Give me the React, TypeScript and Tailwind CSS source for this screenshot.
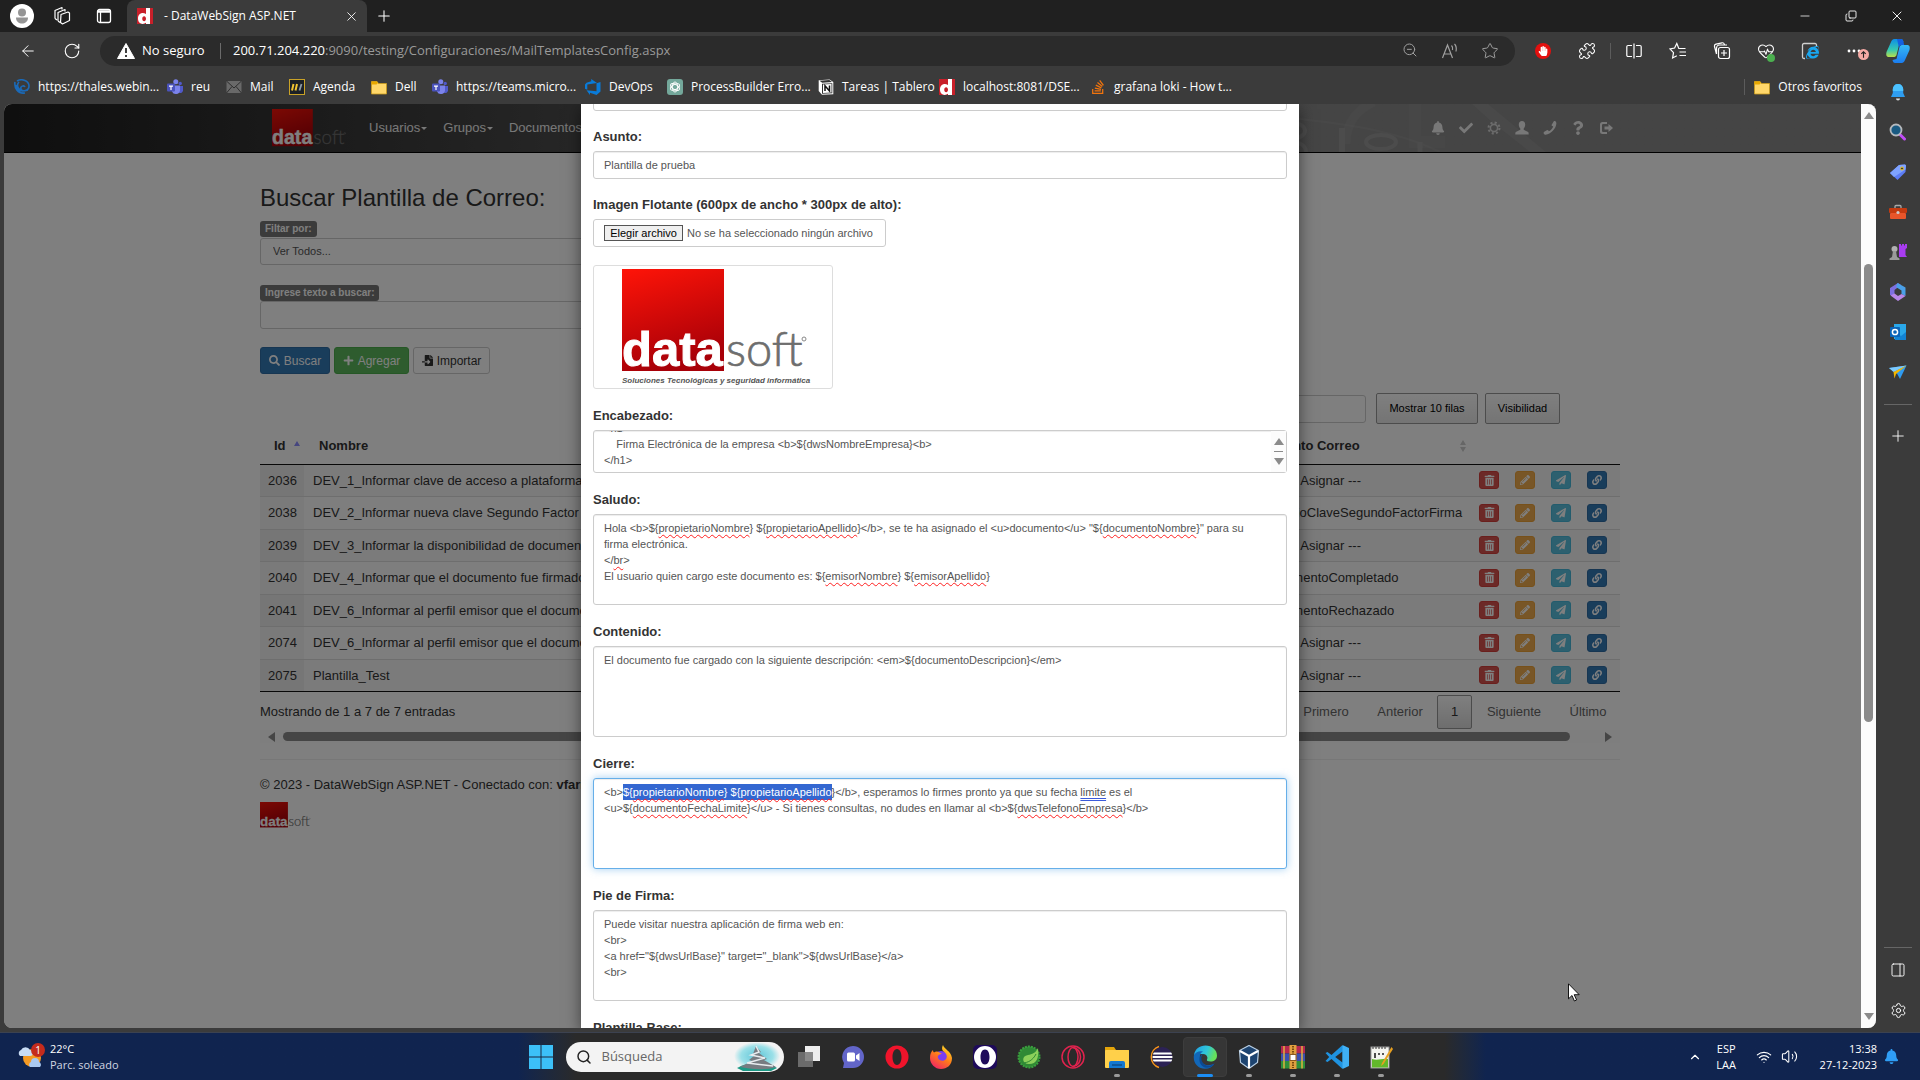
import React, { useEffect, useRef } from "react";
import {
  ArrowLeft, ChevronUp, Copy, HeartPulse, Minus, PanelRight, Plus, Puzzle, RotateCw,
  Search, Settings, Star, Volume2, Wifi, X, ZoomOut,
} from "lucide-react";
import {
  FaBell, FaCheck, FaFileImport, FaHandPaper, FaInternetExplorer, FaLink,
  FaPaperPlane, FaPencilAlt, FaPlus, FaQuestion, FaSearch, FaStackOverflow, FaTrashAlt,
} from "react-icons/fa";

const UI = "font-['Open_Sans','Noto_Sans',sans-serif]";

/* ---------- logos ---------- */

function DatasoftLogo({ id, className, viewBox, tagline }: { id: string; className: string; viewBox: string; tagline?: boolean }) {
  return (
    <svg viewBox={viewBox} className={className} role="img" aria-label="datasoft">
      <defs>
        <linearGradient id={id} x1="0" y1="0" x2="0.3" y2="1">
          <stop offset="0" stopColor="#ff1408" />
          <stop offset="1" stopColor="#a80008" />
        </linearGradient>
      </defs>
      <rect width="102" height="102" fill={`url(#${id})`} />
      <text x="0" y="97" fontFamily="Liberation Sans, sans-serif" fontWeight="700" fontSize="49" fill="#fff" stroke="#fff" strokeWidth="1">data</text>
      <text x="104" y="97" fontFamily="Lato, sans-serif" fontWeight="300" fontSize="47" fill="#6e6e6e" stroke="#6e6e6e" strokeWidth=".7">soft</text>
      <circle cx="182" cy="70" r="2" fill="none" stroke="#888" />
      {tagline && (
        <text x="0" y="114" fontFamily="Liberation Sans, sans-serif" fontStyle="italic" fontWeight="700" fontSize="8" fill="#555">
          Soluciones Tecnológicas y seguridad informática
        </text>
      )}
    </svg>
  );
}

function DFavicon() {
  return (
    <svg viewBox="0 0 16 16" className="size-4 shrink-0">
      <rect width="16" height="16" fill="#c8202a" />
      <path d="M9 0h4v16H9v-1.2C5 17.500 1 15 1 10.500S5 3.500 9 6zM7.200 8.200c-2.600 0-2.600 5 0 5s2.200-5 0-5z" fill="#fff" />
    </svg>
  );
}

function Folder({ className }: { className: string }) {
  return (
    <svg viewBox="0 0 16 16" className={className}>
      <path d="M.5 2.500h5.500l1.500 2h8v10.500H.5z" fill="#ffd76a" stroke="#c99a1c" strokeWidth=".8" />
      <path d="M.5 2.500h5.500l1 1.500-1.500 1.500h-5z" fill="#e8a800" />
    </svg>
  );
}

function Teams() {
  return (
    <svg viewBox="0 0 16 16" className="size-4 shrink-0">
      <circle cx="13.200" cy="4.500" r="1.700" fill="#5059c9" />
      <circle cx="8.800" cy="2.800" r="2.500" fill="#7b83eb" />
      <path d="M10 7h6v4.500a2.700 2.700 0 0 1-4 2.200z" fill="#5059c9" />
      <path d="M5 6.500h8v5a4.200 4.200 0 0 1-8 1z" fill="#7b83eb" />
      <rect y="4.500" width="8" height="8" rx="1" fill="#4b53bc" />
      <path d="M2 6.500h4v1.200H4.600V11H3.400V7.700H2z" fill="#fff" />
    </svg>
  );
}

function Swirl() {
  return (
    <svg viewBox="0 0 16 16" className="size-4 shrink-0" fill="none" stroke="#1b6ab8" strokeWidth="1.600">
      <path d="M1 3c-1 6 3 12 10 11M3 2c5-3 12 0 12 5s-7 6-8 3 3-4 4-2M2 6c2 6 5 7 12 5M5 3c-3 3-1 8 4 9" />
    </svg>
  );
}

function MailIcon() {
  return (
    <svg viewBox="0 0 16 16" className="size-4 shrink-0">
      <rect x=".5" y="2" width="15" height="12" fill="#696969" />
      <path d="M.5 2l7.500 7 7.500-7M.5 14l5.500-6.500M15.500 14L10 7.500" fill="none" stroke="#2e2e2e" />
    </svg>
  );
}

function AgendaIcon() {
  return (
    <svg viewBox="0 0 16 16" className="size-4 shrink-0">
      <rect x=".5" y=".5" width="15" height="15" fill="#1b2026" stroke="#c9a227" />
      <path d="M3 11.500L4.500 5M6.500 11.500L8 5" stroke="#f2c431" strokeWidth="2" />
      <path d="M10.500 11.500L12.500 5" stroke="#8d99a6" strokeWidth="1.800" />
    </svg>
  );
}

function DevOpsIcon() {
  return (
    <svg viewBox="0 0 16 16" className="size-4 shrink-0">
      <path d="M15.500 3v9.500L11.500 16 5 13.700V16l-3.500-4.700 10 .9V4.200zM12 4L6.200 0v2.200L1.500 3.700 0 5.500v4.300l2.300 1V5.500z" fill="#0a7bd8" />
    </svg>
  );
}

function GptIcon() {
  return (
    <svg viewBox="0 0 16 16" className="size-4 shrink-0">
      <rect width="16" height="16" rx="3" fill="#74a89b" />
      <g fill="none" stroke="#fff" strokeWidth=".9">
        <ellipse cx="8" cy="8" rx="2.600" ry="5" />
        <ellipse cx="8" cy="8" rx="2.600" ry="5" transform="rotate(60 8 8)" />
        <ellipse cx="8" cy="8" rx="2.600" ry="5" transform="rotate(120 8 8)" />
      </g>
    </svg>
  );
}

function NotionIcon() {
  return (
    <svg viewBox="0 0 16 16" className="size-4 shrink-0">
      <path d="M.7 1.200L11.500.5 15.300 3v12.300L4 15.700.7 12z" fill="#fff" />
      <path d="M1.500 1.700l9.800-.6L14 3l-9.800.7zM4 4.800l10.300-.6v10L4 14.700z" fill="#333" />
      <path d="M5 5.500l8.500-.5v8.400l-8.500.5z" fill="#fff" />
      <path d="M7 12V6.800L11.500 12V6.500" fill="none" stroke="#111" strokeWidth="1.500" />
    </svg>
  );
}

function Copilot() {
  return (
    <svg viewBox="0 0 24 24" className="size-6">
      <defs>
        <linearGradient id="cp1" x1="0" y1="0" x2="0" y2="1">
          <stop offset="0" stopColor="#0d8ee8" />
          <stop offset=".6" stopColor="#35c9b0" />
          <stop offset="1" stopColor="#b9e04a" />
        </linearGradient>
        <linearGradient id="cp2" x1="0" y1="0" x2="0" y2="1">
          <stop offset="0" stopColor="#35b8f5" />
          <stop offset="1" stopColor="#1b7df0" />
        </linearGradient>
      </defs>
      <path d="M5 3c.5-1.500 1.500-3 3.500-3H15c1.500 0 2 1 2.500 3l-4 1-3 12c-.5 1.500-1.500 2-3 2H3c-3 0-3-2.500-2.500-5z" fill="url(#cp1)" />
      <path d="M19 21c-.5 1.500-1.500 3-3.500 3H9c-1.500 0-2-1-2.500-3l4-1 3-12c.5-1.500 1.500-2 3-2H21c3 0 3 2.500 2.500 5z" fill="url(#cp2)" />
      <path d="M11 0h4c1.500 0 2 1 2.500 3l.7 3H16c-1.500 0-2.500 1-3 3z" fill="#1460e0" />
    </svg>
  );
}

/* ---------- browser chrome ---------- */

function TitleBar() {
  return (
    <div className={`flex h-8 shrink-0 items-center bg-[#202020] text-white ${UI}`}>
      <div className="flex w-[127px] shrink-0 items-center pl-[10px]">
        <button aria-label="Perfil" className="flex size-6 items-center justify-center rounded-full bg-white">
          <svg viewBox="0 0 24 24" className="size-6" fill="#949494"><circle cx="12" cy="8.500" r="4" /><path d="M6 13.500h12c0 8-12 8-12 0z" /></svg>
        </button>
        <button aria-label="Áreas de trabajo" className="ml-[18px]">
          <svg viewBox="0 0 20 20" className="size-5" fill="none" stroke="#fff" strokeWidth="1.200" strokeLinejoin="round">
            <path d="M9 8.500l7-2.500 1.500 1V14.500l-7 3.500-2-1.500zM6 15V6.500L13 3.500v2M3 12.500V4.500L10 1.500v2M3 12.500l2 1.500M6 15l2 1.500" />
          </svg>
        </button>
        <button aria-label="Pestañas" className="ml-[24px]">
          <svg viewBox="0 0 16 16" className="size-4" fill="none" stroke="#fff" strokeWidth="1.300"><rect x="1.500" y="1.500" width="13" height="13" rx="2" /><path d="M1.500 3.500h13" strokeWidth="2.500" /><path d="M4.500 4v10" /></svg>
        </button>
      </div>
      <div className="flex h-8 w-60 items-center rounded-t-lg bg-[#3b3b3b] pl-[10px] pr-2">
        <DFavicon />
        <span className="ml-[11px] flex-1 whitespace-nowrap text-xs">- DataWebSign ASP.NET</span>
        <button aria-label="Cerrar pestaña"><X size={15} strokeWidth={1.400} /></button>
      </div>
      <button aria-label="Nueva pestaña" className="ml-2"><Plus size={18} strokeWidth={1.400} /></button>
      <div className="flex-1" />
      <button aria-label="Minimizar" className="flex w-[46px] justify-center"><Minus size={14} strokeWidth={1.300} /></button>
      <button aria-label="Restaurar" className="flex w-[46px] justify-center"><Copy size={12} strokeWidth={1.800} className="-scale-x-100 rotate-180" /></button>
      <button aria-label="Cerrar" className="flex w-[46px] justify-center"><X size={16} strokeWidth={1.400} /></button>
    </div>
  );
}

function ToolButton({ label, children }: { label: string; children: React.ReactNode }) {
  return <button aria-label={label} className="relative flex w-11 shrink-0 items-center justify-center">{children}</button>;
}

function Toolbar() {
  return (
    <div className={`flex h-[38px] shrink-0 items-center text-white ${UI}`}>
      <button aria-label="Atrás" className="ml-[19px]"><ArrowLeft size={18} strokeWidth={1.300} /></button>
      <button aria-label="Actualizar" className="ml-[26px]"><RotateCw size={18} strokeWidth={1.500} /></button>
      <div className="ml-[19px] flex h-[30px] flex-1 items-center rounded-full bg-[#2b2b2b] pl-[17px] pr-[5px]">
        <svg viewBox="0 0 18 16" className="h-4 w-[18px] shrink-0"><path d="M9 .5L17.500 15.500H.5z" fill="#fff" stroke="#fff" strokeLinejoin="round" /><path d="M9 5v5M9 12v2" stroke="#2b2b2b" strokeWidth="1.800" /></svg>
        <span className="ml-[7px] w-[66px] whitespace-nowrap text-[13px]">No seguro</span>
        <span className="mx-[12px] h-4 w-px bg-[#6b6b6b]" />
        <div className="min-w-0 flex-1 truncate text-[13px] text-[#9a9a9a]">
          <span className="text-white">200.71.204.220</span>:9090/testing/Configuraciones/MailTemplatesConfig.aspx
        </div>
        <div className="flex text-[#a0a0a0]">
          <button aria-label="Alejar" className="flex w-10 justify-center"><ZoomOut size={16} strokeWidth={1.500} /></button>
          <button aria-label="Leer en voz alta" className="flex w-10 justify-center">
            <svg viewBox="0 0 18 18" className="size-[18px]" fill="none" stroke="currentColor" strokeWidth="1.200"><path d="M1.500 16L6.500 3l5 13M3.300 12h6.400M10.500 3.500c1 1 1.500 2.500 1 4.500M13.500 2c2 2 2 5 1.500 7.500" /></svg>
          </button>
          <button aria-label="Favorito" className="flex w-10 justify-center"><Star size={18} strokeWidth={1.300} /></button>
        </div>
      </div>
      <div className="ml-[6px] flex items-center">
        <ToolButton label="Bloqueador"><span className="flex size-4 items-center justify-center rounded-full bg-[#e3100f]"><FaHandPaper size={10} /></span></ToolButton>
        <ToolButton label="Extensiones"><Puzzle size={18} strokeWidth={1.400} /></ToolButton>
        <span className="mx-px h-4 w-px bg-[#5c5c5c]" />
        <ToolButton label="Pantalla dividida">
          <svg viewBox="0 0 16 16" className="size-4" fill="none" stroke="#fff" strokeWidth="1.200"><path d="M6 2.500H2A1.200 1.200 0 0 0 .8 3.700v8.600A1.200 1.200 0 0 0 2 13.500h4M10 2.500h4a1.200 1.200 0 0 1 1.200 1.200v8.600a1.200 1.200 0 0 1-1.200 1.200h-4M8 .5v15" /></svg>
        </ToolButton>
        <ToolButton label="Favoritos">
          <svg viewBox="0 0 18 18" className="size-[18px]" fill="none" stroke="#fff" strokeWidth="1.200"><path d="M16.500 6.500H9.800L7.800 1.500 5.600 6 1 7l3.500 3.700L3.600 16l4.200-2.300M10.500 10h6.500M10.500 13.500h6.500" /></svg>
        </ToolButton>
        <ToolButton label="Colecciones">
          <svg viewBox="0 0 18 18" className="size-[18px]" fill="none" stroke="#fff" strokeWidth="1.200"><rect x="5.500" y="5.500" width="11" height="11" rx="2" /><path d="M11 8v6M8 11h6M3.500 12L1.500 4.500A2 2 0 0 1 3 2.200l6-1.400a2 2 0 0 1 2.300 1.400l.2.800M3.500 12V6A3 3 0 0 1 6.500 3H14" /></svg>
        </ToolButton>
        <ToolButton label="Rendimiento">
          <HeartPulse size={18} strokeWidth={1.400} />
          <span className="absolute bottom-[-2px] left-[23px] size-2 rounded-full bg-[#4cb050]" />
        </ToolButton>
        <ToolButton label="Modo Internet Explorer">
          <svg viewBox="0 0 18 18" className="size-[18px]" fill="none" stroke="#d0d0d0" strokeWidth="1.300"><path d="M15.500 5V3a1.500 1.500 0 0 0-1.500-1.500H3A1.500 1.500 0 0 0 1.500 3v12A1.500 1.500 0 0 0 3 16.500h1" /></svg>
          <FaInternetExplorer size={13} color="#19a7f0" className="absolute left-[18px] top-[4px]" />
        </ToolButton>
        <ToolButton label="Más">
          <svg viewBox="0 0 14 4" className="h-1 w-[14px]" fill="#fff"><circle cx="2" cy="2" r="1.400" /><circle cx="7" cy="2" r="1.400" /><circle cx="12" cy="2" r="1.400" /></svg>
          <svg viewBox="0 0 10 10" className="absolute left-[26px] top-0 size-[11px]"><circle cx="5" cy="5" r="5" fill="#f5aaa5" /><path d="M5 8V2.500M3 4.500l2-2 2 2" stroke="#222" fill="none" /></svg>
        </ToolButton>
        <ToolButton label="Copilot"><Copilot /></ToolButton>
      </div>
    </div>
  );
}

const bookmarks = [
  { w: "w-[153px]", icon: <Swirl />, text: "https://thales.webin..." },
  { w: "w-[59px]", icon: <Teams />, text: "reu" },
  { w: "w-[63px]", icon: <MailIcon />, text: "Mail" },
  { w: "w-[82px]", icon: <AgendaIcon />, text: "Agenda" },
  { w: "w-[61px]", icon: <Folder className="size-4 shrink-0" />, text: "Dell" },
  { w: "w-[153px]", icon: <Teams />, text: "https://teams.micro..." },
  { w: "w-[82px]", icon: <DevOpsIcon />, text: "DevOps" },
  { w: "w-[151px]", icon: <GptIcon />, text: "ProcessBuilder Erro..." },
  { w: "w-[121px]", icon: <NotionIcon />, text: "Tareas | Tablero" },
  { w: "w-[151px]", icon: <DFavicon />, text: "localhost:8081/DSE..." },
  { w: "w-[151px]", icon: <FaStackOverflow size={16} color="#f2740d" className="shrink-0" />, text: "grafana loki - How t..." },
];

function BookmarksBar() {
  return (
    <nav className={`flex h-[34px] min-w-0 shrink-0 items-center pl-[10px] pr-[14px] text-xs text-white ${UI}`}>
      {bookmarks.map((b) => (
        <a key={b.text} href="#" className={`flex shrink-0 items-center gap-2 whitespace-nowrap ${b.w}`}>{b.icon}{b.text}</a>
      ))}
      <div className="flex-1" />
      <span className="h-4 w-px bg-[#5c5c5c]" />
      <a href="#" className="ml-[9px] flex items-center gap-2 whitespace-nowrap"><Folder className="size-4 shrink-0" />Otros favoritos</a>
    </nav>
  );
}

function EdgeSidebar() {
  const item = "flex h-10 w-full items-center justify-center";
  return (
    <aside className="flex w-11 shrink-0 flex-col items-center pt-[2px] text-white">
      <button aria-label="Notificaciones" className={item}>
        <svg viewBox="0 0 16 18" className="h-[18px] w-4"><path d="M8 1a5 5 0 0 0-5.200 5v4L1 14h14l-1.800-4V6A5 5 0 0 0 8 1z" fill="#2e9df0" /><path d="M8 1a5 5 0 0 0-5.200 5v2h10.400V6A5 5 0 0 0 8 1z" fill="#4cc2ff" /><path d="M6 15.500h4a2 2 0 0 1-4 0z" fill="#ddd" /></svg>
      </button>
      <button aria-label="Buscar" className={item}>
        <svg viewBox="0 0 18 18" className="size-[18px]"><path d="M10.500 11l5 5" stroke="#c04cf5" strokeWidth="3" strokeLinecap="round" /><circle cx="7" cy="7" r="5.500" fill="#195a82" stroke="#b5b9bd" strokeWidth="1.800" /></svg>
      </button>
      <button aria-label="Compras" className={item}>
        <svg viewBox="0 0 18 18" className="size-[18px]"><path d="M10 2l6-.5 1 1-.5 6.500-8 8-7.500-7z" fill="#5c7cf5" /><path d="M10 2l6-.5 1 1-.5 4L5 14 1 10z" fill="#7fa3ff" /><circle cx="13" cy="5.500" r="1.500" fill="#3b3b3b" stroke="#f5c518" /></svg>
      </button>
      <button aria-label="Herramientas" className={item}>
        <svg viewBox="0 0 18 16" className="h-4 w-[18px]"><path d="M6 4V2.500A1 1 0 0 1 7 1.500h4a1 1 0 0 1 1 1V4" fill="none" stroke="#aaa" strokeWidth="1.300" /><rect y="4" width="18" height="5" rx="1" fill="#c43a10" /><rect x="1" y="9" width="16" height="6" rx="1" fill="#e8552a" /><circle cx="9" cy="8.500" r="1.600" fill="#ccc" /></svg>
      </button>
      <button aria-label="Juegos" className={item}>
        <svg viewBox="0 0 18 18" className="size-[18px]"><path d="M10 1h2v1.500h1V1h2v1.500h1V1h2v4l-1.500 1v6L18 14h-8z" fill="#a83cf0" /><circle cx="5.500" cy="6" r="3" fill="#b0b0b0" /><path d="M4 8h3l1 6 2.500 1.500V17H.5v-1.500L3 14z" fill="#9a9a9a" /></svg>
      </button>
      <button aria-label="Microsoft 365" className={item}>
        <svg viewBox="0 0 18 18" className="size-[18px]"><path d="M9 0l3 2-6.500 5v6L1 12V5z" fill="#7d6fe0" /><path d="M8.500 0L16.500 4.500V13L12.500 11V7.500L7 4z" fill="#4aa0e8" /><path d="M1.500 12.500L5.500 10.500l3.500 2.500 3.500-2 4 2L9 18z" fill="#b887e8" /></svg>
      </button>
      <button aria-label="Outlook" className={item}>
        <svg viewBox="0 0 18 18" className="size-[18px]"><rect x="5" y="1" width="12" height="15" fill="#2aa8ea" /><path d="M6 9l6 4 5-4v8H6z" fill="#1283d4" /><rect x="1" y="4" width="10" height="10" rx="1" fill="#0a64b8" /><circle cx="6" cy="9" r="2.600" fill="none" stroke="#fff" strokeWidth="1.500" /></svg>
      </button>
      <button aria-label="Drop" className={item}>
        <svg viewBox="0 0 18 16" className="h-4 w-[18px]"><path d="M0 4L17.500 1.500 11 15 8 9.500z" fill="#2f9bf0" /><path d="M0 4l17.500-2.500L4.500 8z" fill="#7ccaff" /><path d="M4.500 8l13-6.500L7 10l-1.500 4.500z" fill="#f5b800" /></svg>
      </button>
      <hr className="mt-[12px] w-7 border-[#666]" />
      <button aria-label="Personalizar" className="mt-[11px] flex h-10 items-center"><Plus size={18} strokeWidth={1.200} /></button>
      <div className="flex-1" />
      <hr className="w-7 border-[#666]" />
      <button aria-label="Barra lateral" className="flex h-11 items-center"><PanelRight size={16} strokeWidth={1.400} /></button>
      <button aria-label="Configuración" className="mb-1 flex h-9 items-center"><Settings size={17} strokeWidth={1.400} /></button>
    </aside>
  );
}

/* ---------- page behind the dialog ---------- */

function Caret() {
  return <span className="ml-px inline-block border-x-[3px] border-t-[3px] border-x-transparent border-t-current align-middle" />;
}

function Glyph({ children }: { children: React.ReactNode }) {
  return <svg viewBox="0 0 14 14" className="size-[14px]" fill="currentColor">{children}</svg>;
}

const headerIcons: [string, React.ReactNode][] = [
  ["Alertas", <FaBell size={14} />],
  ["Tareas", <FaCheck size={14} />],
  ["Ajustes", <Glyph><circle cx="7" cy="7" r="3.600" fill="none" stroke="currentColor" strokeWidth="1.600" opacity=".75" /><circle cx="7" cy="7" r="5.500" fill="none" stroke="currentColor" strokeWidth="2" strokeDasharray="2.100 2.220" opacity=".75" /></Glyph>],
  ["Usuario", <Glyph><path d="M7 0c2 0 3.200 1.400 3.200 3.500 0 1.600-.6 3-1.500 3.900v1.400l4 1.900c.8.400 1 1 1 2.800H.3c0-1.800.2-2.400 1-2.800l4-1.900V7.400C4.400 6.500 3.800 5.100 3.800 3.500 3.800 1.400 5 0 7 0z" /></Glyph>],
  ["Teléfono", <Glyph><path d="M10.800.2c.9-.4 2 .2 2.400 1.200 1.200 4.600-5.200 12-10.500 12.300-1 0-2-.8-2.100-1.800 0-.5.2-.9.600-1.200l2.600-1.500c.6-.3 1.200-.1 1.600.4l.5.700c2-1 3.500-2.800 4.300-4.900l-.9-.3c-.6-.3-.8-.8-.6-1.400z" /></Glyph>],
  ["Ayuda", <FaQuestion size={14} />],
  ["Salir", <Glyph><path d="M8 1H3.500A2.500 2.500 0 0 0 1 3.500v7A2.500 2.500 0 0 0 3.500 13H8v-2H4.200a1.200 1.200 0 0 1-1.200-1.200V4.200A1.200 1.200 0 0 1 4.200 3H8z" /><path d="M9.500 3L14 7l-4.500 4V8.500H5.500v-3h4z" /></Glyph>],
];

function SiteHeader() {
  return (
    <header className="relative h-[49px] overflow-hidden border-b border-black bg-linear-to-r from-[#1e1e1e] via-[#545454] via-35% to-[#8a8a8a] to-70%">
      <svg className="absolute left-1/2 top-0 h-12 w-[700px]" viewBox="0 0 700 48" fill="none" aria-hidden="true">
        <g stroke="#aaa" opacity=".45">
          <path d="M352 18c16 2 18 14 2 17M350 38c12 0 16 5 16 10" strokeWidth="4" />
          <path d="M402 24v24" strokeWidth="6" />
          <ellipse cx="441" cy="38" rx="15" ry="7" strokeWidth="4" />
          <path d="M480 38v10" strokeWidth="5" />
          <path d="M406 40C406 20 416 6 434-2" strokeWidth="9" opacity=".4" />
          <path d="M475 0v38h30" strokeWidth="12" opacity=".35" />
          <path d="M350 14c60 6 110 14 150 34" strokeWidth="2" opacity=".5" />
        </g>
        <path d="M548 0l58 48h-16L552 18 532 0z" fill="#aaa" opacity=".25" />
        <path d="M-445 48c10-8 24-12 36-22l10 22z" fill="#888" opacity=".4" />
      </svg>
      <div className="relative mx-auto flex h-12 w-[1360px] max-w-full items-center text-[13px] text-[#f0f0f0]">
        <a href="#" className="ml-3 w-[97px]"><DatasoftLogo id="lg-nav" viewBox="0 9 190 95" className="h-[38px] w-[76px]" /></a>
        <nav className="flex gap-4">
          <a href="#">Usuarios<Caret /></a>
          <a href="#">Grupos<Caret /></a>
          <a href="#">Documentos<Caret /></a>
        </nav>
        <div className="ml-auto flex">
          {headerIcons.map(([label, icon]) => (
            <a key={label} href="#" aria-label={label} className="flex w-7 justify-center">{icon}</a>
          ))}
        </div>
      </div>
    </header>
  );
}

const rows = [
  ["2036", "DEV_1_Informar clave de acceso a plataforma", "--- Sin Asignar ---"],
  ["2038", "DEV_2_Informar nueva clave Segundo Factor Firma", "CambioClaveSegundoFactorFirma"],
  ["2039", "DEV_3_Informar la disponibilidad de documento", "--- Sin Asignar ---"],
  ["2040", "DEV_4_Informar que el documento fue firmado", "DocumentoCompletado"],
  ["2041", "DEV_6_Informar al perfil emisor que el documento", "DocumentoRechazado"],
  ["2074", "DEV_6_Informar al perfil emisor que el documento", "--- Sin Asignar ---"],
  ["2075", "Plantilla_Test", "--- Sin Asignar ---"],
];

const action = "flex h-[18px] w-5 items-center justify-center rounded-[3px] border text-white";

function TemplatesTable() {
  return (
    <table className="h-[268px] w-full table-fixed border-collapse border-b border-[#111] text-[13px]">
      <colgroup><col className="w-11" /><col /><col className="w-[217px]" /><col className="w-[151px]" /></colgroup>
      <thead>
        <tr className="h-10 border-b border-[#111] text-left">
          <th className="whitespace-nowrap pt-1 pl-[14px]">
            Id<span className="mb-1.5 ml-[8px] inline-block border-x-[3px] border-b-[5px] border-x-transparent border-b-[#8c8cff] align-middle" />
          </th>
          <th className="pt-1 pl-[15px]">Nombre</th>
          <th className="pt-1 pl-[18px]">
            <div className="flex items-center justify-between pr-[3px]">Evento Correo
              <span className="flex flex-col gap-0.5"><span className="border-x-[3px] border-b-[5px] border-x-transparent border-b-[#ccc]" /><span className="border-x-[3px] border-t-[5px] border-x-transparent border-t-[#ccc]" /></span>
            </div>
          </th>
          <th><span className="sr-only">Acciones</span></th>
        </tr>
      </thead>
      <tbody>
        {rows.map(([id, name, event], i) => (
          <tr key={id} className="border-t border-[#ddd] bg-[#fcfcfc] odd:bg-[#f7f7f7] first:border-[#111]">
            <td className={i % 2 ? "bg-[#f4f4f4] pl-2" : "bg-[#ededed] pl-2"}>{id}</td>
            <td className="overflow-hidden whitespace-nowrap pl-[9px]">{name}</td>
            <td className="whitespace-nowrap pl-[10px]">{event}</td>
            <td>
              <div className="flex gap-4 pl-[10px]">
                <button aria-label={`Eliminar ${id}`} className={`${action} border-[#d43f3a] bg-[#d9534f]`}><FaTrashAlt size={11} /></button>
                <button aria-label={`Editar ${id}`} className={`${action} border-[#eea236] bg-[#f0ad4e]`}><FaPencilAlt size={10} /></button>
                <button aria-label={`Enviar ${id}`} className={`${action} border-[#46b8da] bg-[#5bc0de]`}><FaPaperPlane size={10} /></button>
                <button aria-label={`Enlazar ${id}`} className={`${action} border-[#2e6da4] bg-[#337ab7]`}><FaLink size={10} /></button>
              </div>
            </td>
          </tr>
        ))}
      </tbody>
    </table>
  );
}

const badge = "block w-fit rounded-[3px] bg-[#777] px-[5px] text-[10px] leading-4 font-bold text-white";
const dtButton = "h-[31px] rounded-[2px] border border-[#999] bg-linear-to-b from-white to-[#e9e9e9] text-[11px] text-black";

function Page() {
  return (
    <div className="flex flex-col text-[#333]">
      <SiteHeader />
      <main className="mx-auto w-[1360px] max-w-full">
        <h2 className="mt-[29px] text-2xl leading-8">Buscar Plantilla de Correo:</h2>
        <label htmlFor="filter" className={`mt-[7px] ${badge}`}>Filtar por:</label>
        <select id="filter" className="mt-px block h-[27px] w-[500px] appearance-none rounded-[3px] border border-[#ccc] bg-white px-3 text-[11px] text-[#555]">
          <option>Ver Todos...</option>
        </select>
        <label htmlFor="query" className={`mt-[20px] ${badge}`}>Ingrese texto a buscar:</label>
        <input id="query" className="block h-7 w-[500px] rounded-[3px] border border-[#ccc] bg-white px-3 text-[11px]" />
        <div className="mt-[18px] flex gap-1 text-[12px]">
          <button className="flex h-[27px] w-[70px] items-center justify-center gap-1 rounded-[3px] border border-[#2e6da4] bg-[#337ab7] text-white"><FaSearch size={11} />Buscar</button>
          <button className="flex h-[27px] w-[75px] items-center justify-center gap-1 rounded-[3px] border border-[#4cae4c] bg-[#5cb85c] text-white"><FaPlus size={11} />Agregar</button>
          <button className="flex h-[27px] w-[77px] items-center justify-center gap-1 rounded-[3px] border border-[#ccc] bg-white"><FaFileImport size={11} />Importar</button>
        </div>
        <div className="mt-[19px] flex items-center justify-end pr-[60px]">
          <input aria-label="Buscar en la tabla" className="mr-[10px] h-7 w-[180px] rounded-[3px] border border-[#ccc] bg-white" />
          <button className={`mr-[7px] w-[102px] ${dtButton}`}>Mostrar 10 filas</button>
          <button className={`w-[75px] ${dtButton}`}>Visibilidad</button>
        </div>
        <TemplatesTable />
        <div className="mt-[3px] flex h-[34px] items-center text-[13px]">
          <span>Mostrando de 1 a 7 de 7 entradas</span>
          <div className="ml-auto flex items-center text-center text-[#666]">
            <button className="w-[74px]">Primero</button>
            <button className="w-[74px]">Anterior</button>
            <button className="h-[34px] w-[35px] rounded-[2px] border border-[#979797] bg-linear-to-b from-white to-[#dcdcdc] text-[#333]">1</button>
            <button className="w-[84px]">Siguiente</button>
            <button className="w-[64px]">Último</button>
          </div>
        </div>
        <div className="mt-px flex h-[13px] items-center bg-[#fcfcfc] px-[8px]">
          <span className="border-y-[5px] border-r-[7px] border-y-transparent border-r-[#8b8b8b]" />
          <span className="ml-2 mr-[35px] h-[9px] flex-1 rounded-full bg-[#8b8b8b]" />
          <span className="border-y-[5px] border-l-[7px] border-y-transparent border-l-[#8b8b8b]" />
        </div>
        <hr className="mt-4 border-[#eee]" />
        <footer className="mt-4 text-[13px] leading-[18px]">
          <p>© 2023 - DataWebSign ASP.NET - Conectado con: <b>vfarias</b></p>
          <DatasoftLogo id="lg-foot" viewBox="0 9 190 95" className="mt-2 h-[26px] w-[52px]" />
        </footer>
      </main>
    </div>
  );
}

/* ---------- dialog ---------- */

/* «word» marks a spelling underline, ‹word› a grammar underline. */
const strip = (s: string) => s.replace(/[«»‹›]/g, "");

function ProofLayer({ text }: { text: string }) {
  const parts = text.split(/(«[^»]*»|‹[^›]*›)/);
  return (
    <div aria-hidden="true" className="pointer-events-none absolute inset-0 overflow-hidden whitespace-pre-wrap border border-transparent px-[10px] py-[5px] text-transparent">
      {parts.map((p, i) => {
        if (p[0] === "«") return <span key={i} className="underline decoration-[#ff2020] decoration-wavy decoration-1 underline-offset-2 [text-decoration-skip-ink:none]">{strip(p)}</span>;
        if (p[0] === "‹") return <span key={i} className="underline decoration-[#3b5bdb] decoration-double decoration-1 underline-offset-2">{strip(p)}</span>;
        return <React.Fragment key={i}>{p}</React.Fragment>;
      })}
    </div>
  );
}

function Field({ id, label, text, short, select }: { id: string; label: string; text: string; short?: boolean; select?: [string, string] }) {
  const ref = useRef<HTMLTextAreaElement>(null);
  const value = strip(text);
  useEffect(() => {
    const el = ref.current;
    if (!el) return;
    if (short) el.scrollTop = 16;
    if (select) {
      el.focus({ preventScroll: true });
      el.setSelectionRange(value.indexOf(select[0]), value.indexOf(select[1]) + select[1].length);
    }
  }, [short, select, value]);
  return (
    <div className="mb-[18px]">
      <label htmlFor={id} className="mb-[5px] block text-[13px] leading-[18px] font-bold">{label}</label>
      <div className={`relative text-[11px] leading-4 ${short ? "h-[43px]" : "h-[91px]"}`}>
        <textarea
          id={id}
          ref={ref}
          spellCheck={false}
          defaultValue={value}
          className="block h-full w-full resize-none rounded-[3px] border border-[#ccc] bg-white px-[10px] py-[5px] text-[#555] shadow-[inset_0_1px_1px_rgba(0,0,0,0.075)] outline-none [scrollbar-width:none] selection:bg-[#3367d1] selection:text-white focus:border-[#66afe9] focus:shadow-[inset_0_1px_1px_rgba(0,0,0,0.075),0_0_8px_rgba(102,175,233,0.6)]"
        />
        {text !== value && <ProofLayer text={text} />}
        {short && (
          <div className="absolute inset-y-px right-px flex w-[15px] flex-col items-center justify-center gap-[6px] bg-[#fcfcfc]">
            <span className="border-x-[5px] border-b-[7px] border-x-transparent border-b-[#8b8b8b]" />
            <span className="h-px w-[9px] bg-[#8b8b8b]" />
            <span className="border-x-[5px] border-t-[7px] border-x-transparent border-t-[#8b8b8b]" />
          </div>
        )}
      </div>
    </div>
  );
}

const SELECTED: [string, string] = ["${propietarioNombre}", "${propietarioApellido"];

function Dialog() {
  const input = "block w-full rounded-[3px] border border-[#ccc] bg-white px-[10px] text-[11px] text-[#555] shadow-[inset_0_1px_1px_rgba(0,0,0,0.075)]";
  const label = "mb-[5px] block text-[13px] leading-[18px] font-bold";
  return (
    <div role="dialog" aria-label="Plantilla de correo" className="relative mx-auto h-full w-[718px] max-w-full overflow-hidden bg-white px-3 text-[#333] shadow-[0_5px_15px_rgba(0,0,0,0.5)]">
      <input aria-label="Nombre" className={`h-7 -mt-[21px] ${input}`} />
      <div className="mt-[17px] mb-[17px]">
        <label htmlFor="asunto" className={label}>Asunto:</label>
        <input id="asunto" defaultValue="Plantilla de prueba" className={`h-7 ${input}`} />
      </div>
      <div className="mb-[18px]">
        <label htmlFor="imagen" className={label}>Imagen Flotante (600px de ancho * 300px de alto):</label>
        <div className="flex h-7 w-[293px] items-center rounded-[3px] border border-[#ccc] px-[10px] text-[11px] text-[#555]">
          <input id="imagen" type="file" className="sr-only" />
          <button type="button" className="h-4 w-[79px] shrink-0 border border-[#555] bg-[#efefef] leading-3 text-black">Elegir archivo</button>
          <span className="ml-1 whitespace-nowrap">No se ha seleccionado ningún archivo</span>
        </div>
      </div>
      <div className="mb-[18px] h-[124px] w-60 rounded-[3px] border border-[#ddd] py-[3px] pl-7">
        <DatasoftLogo id="lg-main" tagline viewBox="0 0 190 118" className="h-[118px] w-[190px]" />
      </div>
      <Field id="encabezado" label="Encabezado:" short text={"<h1>\n    Firma Electrónica de la empresa <b>${dwsNombreEmpresa}<b>\n</h1>"} />
      <Field id="saludo" label="Saludo:" text={'Hola <b>${«propietarioNombre»} ${«propietarioApellido»}</b>, se te ha asignado el <u>documento</u> "${«documentoNombre»}" para su\nfirma electrónica.\n</«br»>\nEl usuario quien cargo este documento es: ${«emisorNombre»} ${«emisorApellido»}'} />
      <Field id="contenido" label="Contenido:" text={"El documento fue cargado con la siguiente descripción: <em>${documentoDescripcion}</em>"} />
      <Field id="cierre" label="Cierre:" select={SELECTED} text={"<b>${«propietarioNombre»} ${«propietarioApellido»}</b>, esperamos lo firmes pronto ya que su fecha ‹limite› es el\n<u>${«documentoFechaLimite»}</u> - Si tienes consultas, no dudes en llamar al <b>${«dwsTelefonoEmpresa»}</b>"} />
      <Field id="pie" label="Pie de Firma:" text={'Puede visitar nuestra aplicación de firma web en:\n<br>\n<a href="${dwsUrlBase}" target="_blank">${dwsUrlBase}</a>\n<br>'} />
      <Field id="base" label="Plantilla Base:" text="" />
    </div>
  );
}

/* ---------- taskbar ---------- */

const apps: { name: string; running?: boolean; active?: boolean; icon: React.ReactNode }[] = [
  { name: "Vista de tareas", icon: <svg viewBox="0 0 24 24" className="size-6"><rect x="8" y="1" width="15" height="15" fill="#eee" /><rect x="1" y="7" width="15" height="15" fill="#777" opacity=".85" /></svg> },
  { name: "Chat", icon: <svg viewBox="0 0 24 24" className="size-6"><path d="M12 1a11 11 0 1 1 0 22H2l1-5A11 11 0 0 1 12 1z" fill="#6265c9" /><rect x="6" y="7.500" width="8" height="9" rx="1.500" fill="#fff" /><path d="M15 10.500l3.500-2.500v8L15 13.500z" fill="#fff" /></svg> },
  { name: "Opera", icon: <svg viewBox="0 0 24 24" className="size-6"><path fillRule="evenodd" d="M12 .5a11.500 11.500 0 1 0 0 23 11.500 11.500 0 0 0 0-23zm0 3.500c3 0 4.500 4 4.500 8s-1.500 8-4.500 8-4.500-4-4.500-8 1.500-8 4.500-8z" fill="#f0142b" /></svg> },
  { name: "Firefox", icon: <svg viewBox="0 0 24 24" className="size-6"><defs><linearGradient id="ff" x1=".8" y1="0" x2=".2" y2="1"><stop offset="0" stopColor="#ffe226" /><stop offset=".5" stopColor="#ff7a1a" /><stop offset="1" stopColor="#f0206a" /></linearGradient></defs><circle cx="12" cy="13" r="7" fill="#7a3df0" /><path d="M14 0c1 4 8 6 9 13 0 7-5 11-11 11S1 19 1 13c0-4 1-6 3-8 0 1.500.5 2 1 2.500C6.500 6 9 6 10.500 7.500L13 9c-2 0-5 1-4 4s6 4 8 1 0-6-3-8c-1.500-2-1-4 0-6z" fill="url(#ff)" /></svg> },
  { name: "Opera Dev", icon: <svg viewBox="0 0 24 24" className="size-6"><rect width="24" height="24" rx="5" fill="#1e0a5a" /><path fillRule="evenodd" d="M12 1a11 11 0 1 0 0 22 11 11 0 0 0 0-22zm0 3.500c3 0 4.500 3.500 4.500 7.500s-1.500 7.500-4.500 7.500S7.500 16 7.500 12 9 4.500 12 4.500z" fill="#fff" /></svg> },
  { name: "Spring", icon: <svg viewBox="0 0 24 24" className="size-6"><circle cx="12" cy="12" r="10.500" fill="#2f8a35" stroke="#3aa03e" strokeWidth="2" strokeDasharray="2 1" /><path d="M21 3c1 10-1 16-9 16-7 0-8-8-1-9 4-.8 8-2 10-7z" fill="#8bd05a" /><path d="M5 18c6 0 11-3 14-9" stroke="#2f8a35" fill="none" /></svg> },
  { name: "Opera GX", icon: <svg viewBox="0 0 24 24" className="size-6" fill="none" stroke="#e0234e" strokeWidth="1.500"><circle cx="12" cy="12" r="11" /><ellipse cx="12" cy="12" rx="5" ry="9.500" /><path d="M12 2.500c10 1 10 18 0 19" /></svg> },
  { name: "Explorador", running: true, icon: <svg viewBox="0 0 24 24" className="size-6"><path d="M0 2h9l2 3h13v5H0z" fill="#e5a50a" /><rect y="5" width="24" height="18" rx="1" fill="#ffd04a" /><path d="M4 23v-5a2 2 0 0 1 2-2h12a2 2 0 0 1 2 2v5z" fill="#1478d0" /><path d="M7 20h10" stroke="#0d4f8c" strokeWidth="1.500" /></svg> },
  { name: "Eclipse", icon: <svg viewBox="0 0 24 24" className="size-6"><defs><clipPath id="ecl"><circle cx="13.500" cy="12" r="10" /></clipPath></defs><path d="M10 1.500a11 11 0 0 0 0 21" fill="none" stroke="#f7941e" strokeWidth="1.500" /><circle cx="13.500" cy="12" r="10" fill="#2c2255" /><path d="M3 8.500h21M3 12h21M3 15.500h21" stroke="#fff" strokeWidth="1.800" clipPath="url(#ecl)" /></svg> },
  { name: "Edge", active: true, icon: <svg viewBox="0 0 24 24" className="size-6"><defs><linearGradient id="ed" x1="0" y1="0" x2="1" y2=".3"><stop offset="0" stopColor="#1f9de8" /><stop offset=".6" stopColor="#30c6d8" /><stop offset="1" stopColor="#66e05a" /></linearGradient></defs><path d="M1 10C2 4 6.500.5 12.500.5 19 .5 24 5 24 10.500c0 4-3 6-6.500 6-3 0-4-1-3.500-2 1-1.500.5-5-4-5.500-4 0-7 .5-9 1z" fill="url(#ed)" /><path d="M1 10c2-3.500 5.500-4.500 9-3.500C7 8 6.500 11 7 14c1 6 8 8 14.500 4.500C19.500 22 16 23.800 12 23.800 5 23.800-.5 18 1 10z" fill="#1267b8" /><path d="M10 9c-3 3-2 10 4 11.500 3 .5 5.500-.5 7.500-2-3 5.500-12 6-14.500-.5-1.500-4 0-8 3-9z" fill="#0c4a94" /></svg> },
  { name: "VirtualBox", running: true, icon: <svg viewBox="0 0 24 24" className="size-6"><path d="M12 .5l9.500 5-1 12L12 23.500l-8.500-6-1-12z" fill="#1d4470" stroke="#b9cfe4" strokeWidth="1.200" /><path d="M3 6l9 5 9-5M12 11v12" stroke="#fff" strokeWidth="2.200" fill="none" /></svg> },
  { name: "WinRAR", running: true, icon: <svg viewBox="0 0 24 24" className="size-6"><rect y="1" width="24" height="7.500" fill="#b5284f" /><rect y="8.500" width="24" height="7.500" fill="#3b4fb0" /><rect y="16" width="24" height="7.500" fill="#2f8f3a" /><path d="M3 1v22.500M21 1v22.500" stroke="#e0b040" strokeWidth="1.500" /><rect x="8.500" y="0" width="7" height="24" fill="#e0a040" /><path d="M12 1v8M12 17v6" stroke="#7a4a10" strokeDasharray="1.500 1" strokeWidth="2" /><rect x="9" y="9.500" width="6" height="6" fill="#fff" stroke="#8a5a20" /></svg> },
  { name: "VS Code", running: true, icon: <svg viewBox="0 0 24 24" className="size-6"><path d="M17 .5L6.500 10 2.500 7 .5 8l3.700 4-3.700 4 2 1 4-3L17 23.500l6.500-3V3.500zM17.500 6.500v11L10.200 12z" fill="#1f93e0" fillRule="evenodd" /><path d="M17.500 0L24 3v18l-6.500 3z" fill="#3fb0f5" /></svg> },
  { name: "Notepad++", running: true, icon: <svg viewBox="0 0 24 24" className="size-6"><rect x="2" y="2" width="18" height="21" fill="#f5f5f0" stroke="#999" /><path d="M3 14c6 2 10-1 16 0v8.500H3z" fill="#62b82a" /><path d="M4 2v2M7 2v2M10 2v2M13 2v2M16 2v2" stroke="#333" /><path d="M6 8v5M9 9h2M13 9h2" stroke="#222" strokeWidth="1.600" /><path d="M22.500 2L13 18l-1 3 2.500-2L24 4z" fill="#e8a020" /></svg> },
];

function Taskbar() {
  return (
    <div className={`flex h-12 shrink-0 items-center border-t border-[#3c4250] bg-linear-to-r from-[#10244f] from-27% via-[#2a2a2a] via-30% to-[#2a2a2a] to-73% text-white ${UI}`}>
      <div className="flex h-full flex-1 items-center pl-[18px]">
        <svg viewBox="0 0 28 28" className="size-7 shrink-0">
          <circle cx="14" cy="15" r="9" fill="#f59a23" />
          <path d="M2 13a3.500 3.500 0 0 1 1-6 5 5 0 0 1 9 0 3 3 0 0 1 0 6z" fill="#c8dcf5" />
          <path d="M12 24a3 3 0 0 1 1-5 4 4 0 0 1 8 0 3 3 0 0 1 1 5z" fill="#a9c8f0" />
          <circle cx="20" cy="7" r="7" fill="#c42b1c" />
          <text x="20" y="11" fontSize="10" textAnchor="middle" fill="#fff">1</text>
        </svg>
        <div className="ml-1 text-[11px] leading-4"><div>22°C</div><div className="text-[#d0d6e2]">Parc. soleado</div></div>
      </div>
      <div className="ml-[14px] flex items-center">
        <button aria-label="Inicio" className="mr-[13px]">
          <svg viewBox="0 0 24 24" className="size-6"><path d="M0 0h11.500v11.500H0zM12.500 0H24v11.500H12.500zM0 12.500h11.500V24H0zM12.500 12.500H24V24H12.500z" fill="#3cc0f8" /></svg>
        </button>
        <div className="flex h-[30px] w-[218px] items-center overflow-hidden rounded-full bg-[#f3f3f3] pl-[10px] pr-[3px]">
          <Search size={16} strokeWidth={2.200} className="shrink-0 text-[#222]" />
          <input aria-label="Búsqueda" placeholder="Búsqueda" className="ml-[10px] w-0 flex-1 bg-transparent text-[13px] text-[#333] placeholder:text-[#666]" />
          <svg viewBox="0 0 48 28" className="h-7 w-12 shrink-0">
            <defs><radialGradient id="tree"><stop offset="0" stopColor="#5fc5d8" /><stop offset=".7" stopColor="#9be0e8" /><stop offset="1" stopColor="#f3f3f3" /></radialGradient></defs>
            <ellipse cx="24" cy="13" rx="23" ry="14" fill="url(#tree)" />
            <path d="M4 25c10-6 28-8 40 0l-6 3H10z" fill="#1d9a86" />
            <path d="M23 3l5 6-2 1 8 6-3 1 12 7c-12 4-26 2-36 0l12-6-3-1 6-5-2-1z" fill="#777c82" />
            <path d="M23 3l3 6-8 3 14 3-18 5 26 3" fill="none" stroke="#e8ecef" strokeWidth="1.500" />
          </svg>
        </div>
        <div className="ml-[3px] flex">
          {apps.map((a) => (
            <button key={a.name} aria-label={a.name} className={a.active ? "relative flex h-10 w-11 items-center justify-center rounded border border-[#3d3d3d] bg-[#363636]" : "relative flex h-10 w-11 items-center justify-center"}>
              {a.icon}
              {a.running && <span className="absolute bottom-0 left-[19px] h-[3px] w-[6px] rounded-full bg-[#9a9a9a]" />}
              {a.active && <span className="absolute -bottom-px left-[13px] h-[3px] w-4 rounded-full bg-[#1c8ef5]" />}
            </button>
          ))}
        </div>
      </div>
      <div className="flex h-full flex-1 items-center justify-end bg-linear-to-r from-[#2a2a2a] from-8% to-[#10244f] to-16% pr-[21px] text-[11px] leading-4">
        <button aria-label="Iconos ocultos" className="mr-[14px]"><ChevronUp size={14} /></button>
        <div className="mr-[20px] text-center"><div>ESP</div><div>LAA</div></div>
        <Wifi size={16} strokeWidth={1.800} className="mr-[9px]" />
        <Volume2 size={17} strokeWidth={1.500} className="mr-[15px]" />
        <div className="w-[64px] whitespace-nowrap text-right"><div>13:38</div><div>27-12-2023</div></div>
        <FaBell size={15} color="#2f9df5" className="ml-[7px]" />
      </div>
    </div>
  );
}

export default function App() {
  return (
    <div className="relative flex h-screen w-full flex-col overflow-hidden bg-[#3b3b3b] font-['Liberation_Sans',Arial,sans-serif]">
      <TitleBar />
      <Toolbar />
      <div className="flex min-h-0 flex-1">
        <div className="flex min-w-0 flex-1 flex-col pb-1 pl-1">
          <BookmarksBar />
          <div className="relative min-h-0 flex-1 overflow-hidden rounded-lg bg-white">
            <Page />
            <div className="absolute inset-0 bg-black/50">
              <Dialog />
            </div>
            <div className="absolute inset-y-0 right-0 flex w-[15px] flex-col items-center bg-[#fcfcfc] py-2">
              <span className="border-x-[5px] border-b-[7px] border-x-transparent border-b-[#8b8b8b]" />
              <div className="flex w-full flex-1 flex-col items-center pt-[145px] pb-[291px]"><span className="w-[9px] flex-1 rounded-full bg-[#8b8b8b]" /></div>
              <span className="border-x-[5px] border-t-[7px] border-x-transparent border-t-[#8b8b8b]" />
            </div>
          </div>
        </div>
        <EdgeSidebar />
      </div>
      <Taskbar />
      <svg viewBox="0 0 12 19" className="pointer-events-none absolute left-[1568px] top-[983px] h-[19px] w-3"><path d="M.5.8v15l3.500-3.300 2.400 5.500 2.200-1-2.400-5.300h5z" fill="#fff" stroke="#000" strokeWidth=".9" /></svg>
    </div>
  );
}
